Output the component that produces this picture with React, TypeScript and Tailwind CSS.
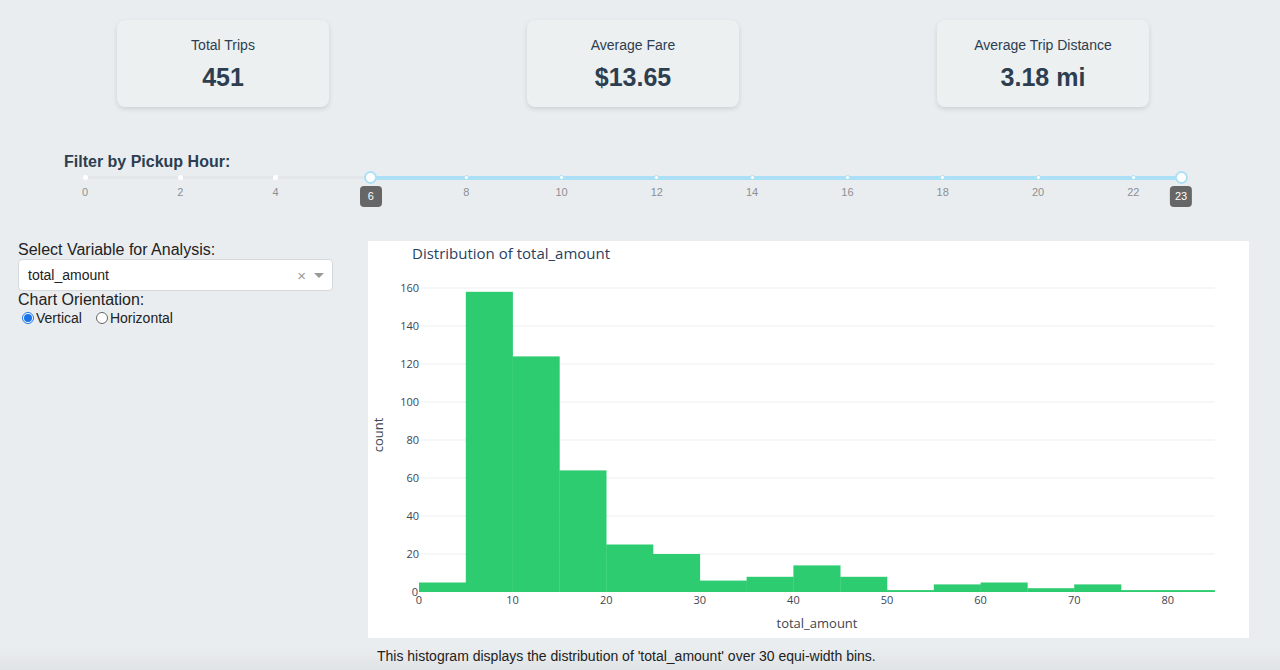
const stats = [
  { label: "Total Trips", value: "451" },
  { label: "Average Fare", value: "$13.65" },
  { label: "Average Trip Distance", value: "3.18 mi" },
];

const bins = [5, 158, 124, 64, 25, 20, 6, 8, 14, 8, 1, 4, 5, 2, 4, 1, 1];
const marks = [0, 2, 4, 6, 8, 10, 12, 14, 16, 18, 20, 22];
const range = [6, 23];

// plot geometry (px inside the chart svg)
const X0 = 51;
const XS = 9.36;
const Y0 = 351;
const YS = 1.9;

function StatCard({ label, value }: { label: string; value: string }) {
  return (
    <div className="w-[212px] h-[87px] rounded-lg bg-[#edf0f1] shadow-[0_2px_5px_rgba(0,0,0,0.12)] flex flex-col items-center pt-[15px]">
      <div className="text-[14px] leading-[20px] text-[#2c3e50]">{label}</div>
      <div className="mt-[8px] text-[25px] leading-[28px] font-bold text-[#2c3e50]">{value}</div>
    </div>
  );
}

function HourSlider() {
  const pct = (h: number) => `${(h / 23) * 100}%`;
  return (
    <div className="relative ml-[67px] w-[1096px] h-[48px]">
      {/* track */}
      <div className="absolute left-0 right-0 top-[4px] h-[3px] rounded bg-[#e3e7ea]" />
      <div
        className="absolute top-[3.5px] h-[4px] bg-[#ace0f7]"
        style={{ left: pct(range[0]), width: `${((range[1] - range[0]) / 23) * 100}%` }}
      />
      {marks.map((m) => (
        <div key={m}>
          <div
            className={
              "absolute top-[3px] w-[5px] h-[5px] -ml-[2.5px] rounded-full bg-white " +
              (m > range[0] ? "border border-[#ace0f7]" : "")
            }
            style={{ left: pct(m) }}
          />
          {!range.includes(m) && (
            <div
              className="absolute top-[14px] -translate-x-1/2 text-[11px] leading-[12px] text-[#8a8f94]"
              style={{ left: pct(m) }}
            >
              {m}
            </div>
          )}
        </div>
      ))}
      {range.map((h) => (
        <div key={h}>
          <div
            className="absolute top-[-1px] w-[13px] h-[13px] -ml-[6.5px] rounded-full bg-white border-2 border-[#ace0f7]"
            style={{ left: pct(h) }}
          />
          <div
            className="absolute top-[14px] -translate-x-1/2 min-w-[22px] h-[21px] px-[5px] rounded bg-[#666] text-white text-[11px] leading-[21px] text-center"
            style={{ left: pct(h) }}
          >
            {h}
          </div>
        </div>
      ))}
    </div>
  );
}

function Histogram() {
  const yticks = [20, 40, 60, 80, 100, 120, 140, 160];
  const xticks = [0, 10, 20, 30, 40, 50, 60, 70, 80];
  return (
    <svg width="881" height="397" className="block" style={{ fontFamily: "'Open Sans', sans-serif" }}>
      <text x="44" y="18" fontSize="15" fill="#2a3f5f">Distribution of total_amount</text>
      {yticks.map((t) => (
        <line key={t} x1={X0} x2={X0 + 85 * XS} y1={Y0 - t * YS} y2={Y0 - t * YS} stroke="#eceff2" strokeWidth="1" />
      ))}
      {bins.map((c, i) => (
        <rect key={i} x={X0 + i * 5 * XS} width={5 * XS + 0.3} y={Y0 - c * YS} height={c * YS} fill="#2ecc71" />
      ))}
      {[0, ...yticks].map((t) => (
        <text key={t} x={t === 0 ? 50 : 51} y={Y0 - t * YS + 4} fontSize="11" fill="#3d4653" textAnchor="end">
          {t}
        </text>
      ))}
      {xticks.map((t) => (
        <text key={t} x={X0 + t * XS} y={363} fontSize="11" fill="#3d4653" textAnchor="middle">
          {t}
        </text>
      ))}
      <text x="449" y="387" fontSize="13" fill="#3d4653" textAnchor="middle">total_amount</text>
      <text x="15" y="194" fontSize="13" fill="#3d4653" textAnchor="middle" transform="rotate(-90 15 194)">
        count
      </text>
    </svg>
  );
}

function Radio({ label, checked }: { label: string; checked?: boolean }) {
  return (
    <label className="flex items-center">
      {checked ? (
        <span className="w-[12px] h-[12px] rounded-full border border-[#1a73e8] bg-white flex items-center justify-center">
          <span className="w-[8px] h-[8px] rounded-full bg-[#1a73e8]" />
        </span>
      ) : (
        <span className="w-[12px] h-[12px] rounded-full border border-[#666] bg-white" />
      )}
      <span className="ml-[2px]">{label}</span>
    </label>
  );
}

export default function App() {
  return (
    <div className="relative min-h-screen overflow-hidden bg-[#eaedef] pl-[18px] pr-[32px] pt-[20px] font-['Liberation_Sans',Arial,sans-serif] text-[#222]">
      {/* KPI cards */}
      <div className="flex justify-around">
        {stats.map((s) => (
          <StatCard key={s.label} {...s} />
        ))}
      </div>

      {/* Hour filter */}
      <div className="mt-[45px] ml-[46px] text-[16px] leading-[20px] font-bold text-[#2c3e50]">Filter by Pickup Hour:</div>
      <HourSlider />

      {/* Controls + chart */}
      <div className="mt-[21px] flex">
        <div className="w-[350px] shrink-0 text-[16px] leading-[18px] text-[#222]">
          <div>Select Variable for Analysis:</div>
          <div className="w-[315px] h-[32px] rounded bg-white border border-[#d6d9dc] flex items-center pl-[9px] pr-[8px] text-[14px]">
            <span className="flex-1">total_amount</span>
            <span className="text-[#999] text-[15px] leading-none mr-[8px]">×</span>
            <span className="w-0 h-0 border-l-[5px] border-r-[5px] border-t-[5px] border-l-transparent border-r-transparent border-t-[#999]" />
          </div>
          <div>Chart Orientation:</div>
          <div className="flex gap-[14px] pl-[4px] text-[14px]">
            <Radio label="Vertical" checked />
            <Radio label="Horizontal" />
          </div>
        </div>
        <div>
          <div className="bg-white">
            <Histogram />
          </div>
          <p className="mt-[9px] pl-[9px] text-[14px] leading-[18px] text-[#222]">
            This histogram displays the distribution of 'total_amount' over 30 equi-width bins.
          </p>
        </div>
      </div>

      {/* faint window shadow at the bottom edge */}
      <div className="pointer-events-none absolute left-0 right-0 bottom-0 h-[22px] bg-gradient-to-b from-transparent to-black/[0.04]" />
    </div>
  );
}
